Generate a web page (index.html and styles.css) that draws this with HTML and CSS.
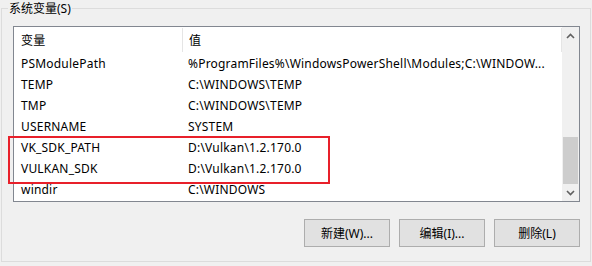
FILE: index.html
```html
<!DOCTYPE html>
<html lang="zh-CN">
<head>
<meta charset="utf-8">
<title>系统变量</title>
<link rel="stylesheet" href="styles.css">
</head>
<body>
<fieldset class="group">
  <legend class="group-label">系统变量(S)</legend>
  <div class="list">
    <div class="list-content">
      <div class="list-header">
        <div class="col col-name hcell">变量</div>
        <div class="col col-value hcell">值</div>
      </div>
      <div class="row"><div class="col col-name">PSModulePath</div><div class="col col-value">%ProgramFiles%\WindowsPowerShell\Modules;C:\WINDOW...</div></div>
      <div class="row"><div class="col col-name">TEMP</div><div class="col col-value">C:\WINDOWS\TEMP</div></div>
      <div class="row"><div class="col col-name">TMP</div><div class="col col-value">C:\WINDOWS\TEMP</div></div>
      <div class="row"><div class="col col-name">USERNAME</div><div class="col col-value">SYSTEM</div></div>
      <div class="row"><div class="col col-name">VK_SDK_PATH</div><div class="col col-value">D:\Vulkan\1.2.170.0</div></div>
      <div class="row"><div class="col col-name">VULKAN_SDK</div><div class="col col-value">D:\Vulkan\1.2.170.0</div></div>
      <div class="row"><div class="col col-name">windir</div><div class="col col-value">C:\WINDOWS</div></div>
    </div>
    <div class="scrollbar">
      <div class="sb-btn">
        <svg width="9" height="6" viewBox="0 0 9 6"><path d="M1 5 L4.5 1.5 L8 5" fill="none" stroke="#606060" stroke-width="1.6"/></svg>
      </div>
      <div class="sb-track"><div class="sb-thumb"></div></div>
      <div class="sb-btn">
        <svg width="9" height="6" viewBox="0 0 9 6"><path d="M1 1 L4.5 4.5 L8 1" fill="none" stroke="#606060" stroke-width="1.6"/></svg>
      </div>
    </div>
  </div>
  <div class="buttons">
    <button class="btn">新建(W)...</button>
    <button class="btn">编辑(I)...</button>
    <button class="btn">删除(L)</button>
  </div>
  <div class="highlight"></div>
</fieldset>
</body>
</html>
```

FILE: styles.css
```css
html, body {
  margin: 0;
  padding: 0;
}
body {
  width: 592px;
  height: 266px;
  background: #f0f0f0;
  font-family: "Noto Sans", "Noto Sans CJK SC", sans-serif;
  font-size: 12px;
  color: #000;
  overflow: hidden;
}
.group {
  position: relative;
  box-sizing: border-box;
  width: 590px;
  height: 262px;
  margin: 0 0 0 1px;
  padding: 9px 10px 13px 11px;
  border: 1px solid #dcdcdc;
  min-width: 0;
}
.group-label {
  padding: 0 1px;
  margin-left: -5px;
  line-height: 17px;
  font-size: 12px;
}
.list {
  display: flex;
  width: 567px;
  height: 176px;
  box-sizing: border-box;
  border: 1px solid #828790;
  background: #fff;
  overflow: hidden;
}
.list-content {
  flex: 1;
  display: flex;
  flex-direction: column;
  overflow: hidden;
  letter-spacing: 0.2px;
}
.list-header {
  display: flex;
  height: 26px;
  flex: none;
  align-items: center;
}
.col {
  white-space: nowrap;
  overflow: hidden;
}
.col-name {
  width: 161px;
  padding-left: 7px;
}
.col-value {
  flex: 1;
  padding-left: 6px;
}
.hcell {
  height: 24px;
  line-height: 26px;
}
.hcell.col-name {
  border-right: 1px solid #e5e5e5;
}
.hcell.col-value {
  border-right: 1px solid #e5e5e5;
}
.row {
  display: flex;
  flex: none;
  height: 21px;
  line-height: 21px;
}
.scrollbar {
  width: 17px;
  display: flex;
  flex-direction: column;
  background: #f0f0f0;
}
.sb-btn {
  height: 17px;
  display: flex;
  align-items: center;
  justify-content: center;
}
.sb-track {
  flex: 1;
  display: flex;
  flex-direction: column;
  justify-content: flex-end;
  padding: 0 1px;
}
.sb-thumb {
  height: 47px;
  background: #cdcdcd;
}
.buttons {
  display: flex;
  justify-content: flex-end;
  gap: 9px;
  width: 567px;
  margin-top: 17px;
}
.btn {
  width: 86px;
  height: 28px;
  box-sizing: border-box;
  background: #e1e1e1;
  border: 1px solid #adadad;
  font-family: "Noto Sans", "Noto Sans CJK SC", sans-serif;
  font-size: 12px;
  color: #000;
  padding: 0;
}
.highlight {
  position: absolute;
  left: 6px;
  top: 119px;
  width: 322px;
  height: 48px;
  box-sizing: border-box;
  border: 2px solid #e8202a;
}
```
